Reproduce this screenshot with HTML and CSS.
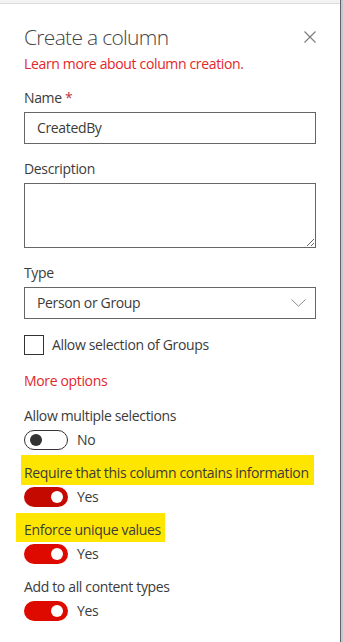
FILE: index.html
```html
<!DOCTYPE html>
<html>
<head>
<meta charset="utf-8">
<link rel="stylesheet" href="styles.css">
</head>
<body>
<div class="panel">
  <div class="topstrip"></div>
  <div class="content">
    <div class="header">
      <div class="title">Create a column</div>
      <svg class="close" width="12" height="12" viewBox="0 0 12 12"><path d="M0.5 0.5 L11.5 11.5 M11.5 0.5 L0.5 11.5" stroke="#7a7a7a" stroke-width="1.1" fill="none"/></svg>
    </div>
    <div class="link">Learn more about column creation.</div>

    <div class="label first">Name <span class="req">*</span></div>
    <div class="field">CreatedBy</div>

    <div class="label">Description</div>
    <textarea class="area"></textarea>

    <div class="label">Type</div>
    <div class="field select">
      <span>Person or Group</span>
      <svg width="15" height="8" viewBox="0 0 15 8"><path d="M0.5 0.5 L7.5 7.2 L14.5 0.5" stroke="#8a8a8a" stroke-width="1" fill="none"/></svg>
    </div>

    <div class="check">
      <span class="box"></span>
      <span>Allow selection of Groups</span>
    </div>

    <div class="more">More options</div>

    <div class="group g1">
      <div class="label-t">Allow multiple selections</div>
      <div class="toggle-row"><span class="toggle off"><span class="knob"></span></span><span class="state">No</span></div>
    </div>

    <div class="group">
      <div class="label-t hl hl1">Require that this column contains information</div>
      <div class="toggle-row"><span class="toggle on dark"><span class="knob"></span></span><span class="state">Yes</span></div>
    </div>

    <div class="group">
      <div class="label-t hl hl2">Enforce unique values</div>
      <div class="toggle-row"><span class="toggle on"><span class="knob"></span></span><span class="state">Yes</span></div>
    </div>

    <div class="group">
      <div class="label-t">Add to all content types</div>
      <div class="toggle-row"><span class="toggle on"><span class="knob"></span></span><span class="state">Yes</span></div>
    </div>
  </div>
</div>
</body>
</html>
```

FILE: styles.css
```css
html, body {
  margin: 0;
  padding: 0;
}
body {
  background: #c3c8d1;
  font-family: "Open Sans", "Noto Sans", sans-serif;
  font-size: 14px;
  letter-spacing: -0.35px;
  color: #3b3b3b;
  width: 343px;
  height: 642px;
  overflow: hidden;
}
.panel {
  width: 340px;
  height: 642px;
  background: #fff;
  border-right: 1px solid #5f6368;
}
.topstrip {
  height: 3px;
  background: #f3f3f3;
  border-bottom: 1px solid #dcdcdc;
}
.content {
  padding: 0 24px;
  display: flex;
  flex-direction: column;
}
.header {
  display: flex;
  justify-content: space-between;
  align-items: center;
  margin-top: 19px;
  height: 28px;
}
.title {
  font-size: 21px;
  font-weight: 300;
  line-height: 28px;
  letter-spacing: -0.7px;
  color: #444;
}
.close {
  display: block;
}
.link {
  margin-top: 3px;
  line-height: 20px;
  color: #e3262a;
}
.label {
  line-height: 20px;
  margin-top: 15px;
  margin-bottom: 4px;
}
.label.first {
  margin-top: 14px;
}
.req {
  color: #c0303a;
}
.field {
  box-sizing: border-box;
  height: 32px;
  border: 1px solid #666;
  padding: 0 12px;
  line-height: 30px;
  color: #3b3b3b;
}
.area {
  box-sizing: border-box;
  height: 65px;
  width: 100%;
  border: 1px solid #666;
  margin: 0;
  padding: 6px 12px;
  font: inherit;
  resize: vertical;
  display: block;
}
.select {
  display: flex;
  justify-content: space-between;
  align-items: center;
  padding-right: 9px;
}
.select svg {
  display: block;
  margin-top: -1px;
}
.check {
  margin-top: 16px;
  display: flex;
  align-items: center;
  gap: 8px;
  line-height: 20px;
}
.box {
  box-sizing: border-box;
  width: 20px;
  height: 20px;
  border: 1px solid #333;
}
.more {
  margin-top: 16px;
  line-height: 20px;
  color: #e3262a;
}
.group {
  margin-top: 13px;
  display: flex;
  flex-direction: column;
  gap: 4px;
}
.group.g1 {
  margin-top: 15px;
}
.label-t {
  line-height: 20px;
}
.hl {
  width: fit-content;
  background: #ffe600;
  white-space: nowrap;
}
.hl1 {
  margin: -8px 0 -2px -3px;
  padding: 8px 5px 2px 3px;
}
.hl2 {
  margin: -7px 0 -2px -8px;
  padding: 7px 4px 2px 8px;
}
.toggle-row {
  display: flex;
  align-items: center;
  height: 20px;
}
.toggle {
  box-sizing: border-box;
  width: 44px;
  height: 20px;
  border-radius: 10px;
  position: relative;
  display: flex;
  align-items: center;
}
.toggle.off {
  border: 1px solid #333;
  background: #fff;
  padding-left: 5px;
}
.toggle.off .knob {
  background: #333;
}
.toggle.on {
  background: #de0a00;
  justify-content: flex-end;
  padding-right: 5px;
}
.toggle.on.dark {
  background: #c40a00;
}
.toggle.on .knob {
  background: #fff;
}
.knob {
  width: 12px;
  height: 12px;
  border-radius: 50%;
}
.state {
  margin-left: 9px;
  line-height: 20px;
}
```
